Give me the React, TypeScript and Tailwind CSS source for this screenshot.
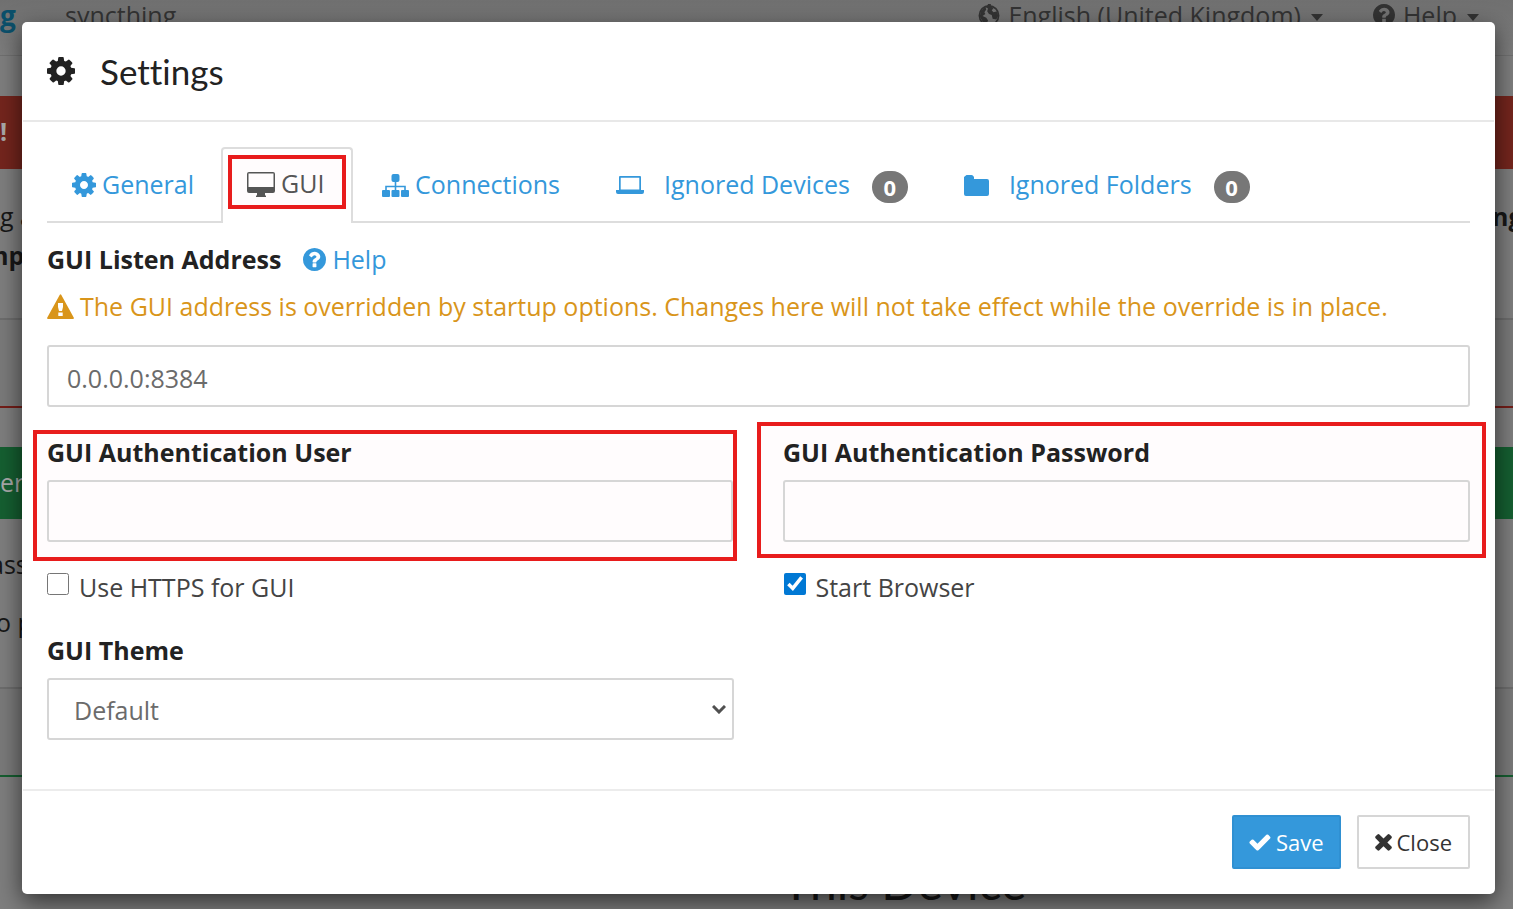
import React from "react";

type IconProps = { className?: string };

function CogIcon({ className }: IconProps) {
  return (
    <svg viewBox="128 128 1536 1536" fill="currentColor" aria-hidden="true" className={className}>
      <path d="M1152 896q0-106-75-181t-181-75-181 75-75 181 75 181 181 75 181-75 75-181zm512-109v222q0 12-8 23t-20 13l-185 28q-19 54-39 91 35 50 107 138 10 12 10 25t-9 23q-27 37-99 108t-94 71q-12 0-26-9l-138-108q-44 23-91 38-16 136-29 186-7 28-36 28h-222q-14 0-24.5-8.5t-11.5-21.5l-28-184q-49-16-90-37l-141 107q-10 9-25 9-14 0-25-11-126-114-165-168-7-10-7-23 0-12 8-23 15-21 51-66.5t54-70.5q-27-50-41-99l-183-27q-13-2-21-12.5t-8-23.5v-222q0-12 8-23t19-13l186-28q14-46 39-92-40-57-107-138-10-12-10-24 0-10 9-23 26-36 98.5-107.5t94.5-71.5q13 0 26 10l138 107q44-23 91-38 16-136 29-186 7-28 36-28h222q14 0 24.5 8.500t11.5 21.500l28 184q49 16 90 37l142-107q9-9 24-9 13 0 25 10 129 119 165 170 7 8 7 22 0 12-8 23-15 21-51 66.500t-54 70.500q26 50 41 98l183 28q13 2 21 12.500t8 23.500z" />
    </svg>
  );
}

function HelpIcon({ className }: IconProps) {
  return (
    <svg viewBox="128 128 1536 1536" fill="currentColor" aria-hidden="true" className={className}>
      <path d="M1024 1376v-192q0-14-9-23t-23-9h-192q-14 0-23 9t-9 23v192q0 14 9 23t23 9h192q14 0 23-9t9-23zm256-672q0-88-55.5-163t-138.5-116-170-41q-243 0-371 213-15 24 8 42l132 100q7 6 19 6 16 0 25-12 53-68 86-92 34-24 86-24 48 0 85.5 26t37.5 59q0 38-20 61t-68 45q-63 28-115.5 86.5t-52.5 125.5v36q0 14 9 23t23 9h192q14 0 23-9t9-23q0-19 21.5-49.5t54.5-49.5q32-18 49-28.5t46-35 44.5-48 28-60.5 12.5-81zm384 192q0 209-103 385.5t-279.5 279.5-385.5 103-385.5-103-279.5-279.5-103-385.5 103-385.5 279.5-279.5 385.5-103 385.5 103 279.5 279.5 103 385.5z" />
    </svg>
  );
}

function CheckIcon({ className }: IconProps) {
  return (
    <svg viewBox="90 300 1620 1250" fill="currentColor" aria-hidden="true" className={className}>
      <path d="M1671 566q0 40-28 68l-724 724-136 136q-28 28-68 28t-68-28l-136-136-362-362q-28-28-28-68t28-68l136-136q28-28 68-28t68 28l294 295 656-657q28-28 68-28t68 28l136 136q28 28 28 68z" />
    </svg>
  );
}

function TimesIcon({ className }: IconProps) {
  return (
    <svg viewBox="290 366 1210 1200" fill="currentColor" aria-hidden="true" className={className}>
      <path d="M1490 1322q0 40-28 68l-136 136q-28 28-68 28t-68-28l-294-294-294 294q-28 28-68 28t-68-28l-136-136q-28-28-28-68t28-68l294-294-294-294q-28-28-28-68t28-68l136-136q28-28 68-28t68 28l294 294 294-294q28-28 68-28t68 28l136 136q28 28 28 68t-28 68l-294 294 294 294q28 28 28 68z" />
    </svg>
  );
}

function DesktopIcon({ className }: IconProps) {
  return (
    <svg viewBox="0 0 28 25" fill="currentColor" aria-hidden="true" className={className}>
      <path fillRule="evenodd" d="M2 0h24a2 2 0 0 1 2 2v17a2 2 0 0 1-2 2h-8v2l1 1v1H9v-1l1-1v-2H2a2 2 0 0 1-2-2V2a2 2 0 0 1 2-2Zm-.5 1.5V15h25V1.500Z" />
    </svg>
  );
}

function SitemapIcon({ className }: IconProps) {
  return (
    <svg viewBox="0 0 27 23" fill="currentColor" aria-hidden="true" className={className}>
      <rect x="9.500" width="8" height="8" rx="2" />
      <rect y="16" width="8" height="7" rx="1" />
      <rect x="9.500" y="16" width="8" height="7" rx="1" />
      <rect x="19" y="16" width="8" height="7" rx="1" />
      <path d="M13.500 7v10M4 17v-4.500h19V17" fill="none" stroke="currentColor" strokeWidth="1.600" />
    </svg>
  );
}

function LaptopIcon({ className }: IconProps) {
  return (
    <svg viewBox="0 0 28 18" fill="currentColor" aria-hidden="true" className={className}>
      <path fillRule="evenodd" d="M4 0h20a1 1 0 0 1 1 1v13h3v2a2 2 0 0 1-2 2H2a2 2 0 0 1-2-2v-2h3V1a1 1 0 0 1 1-1Zm.7 1.700V13.500h18.600V1.700Z" />
    </svg>
  );
}

function FolderIcon({ className }: IconProps) {
  return (
    <svg viewBox="0 0 25 21" fill="currentColor" aria-hidden="true" className={className}>
      <path d="M2.500 0h5q1.500 0 2.500 2v2h13a2 2 0 0 1 2 2v13a2 2 0 0 1-2 2H2a2 2 0 0 1-2-2V2Z" />
    </svg>
  );
}

function WarningIcon({ className }: IconProps) {
  return (
    <svg viewBox="0 0 27 25" fill="currentColor" aria-hidden="true" className={className}>
      <path fillRule="evenodd" d="M12.800.8q.7-1.200 1.400 0L26.700 23.500q.6 1.200-.7 1.500H1q-1.300-.3-.7-1.500ZM11 9v4l1 4h3l1-4V9Zm.3 9.500V22h4.400v-3.500Z" />
    </svg>
  );
}

function GlobeIcon({ className }: IconProps) {
  return (
    <svg viewBox="0 0 24 24" aria-hidden="true" className={className}>
      <circle cx="12" cy="12.500" r="10.500" fill="none" stroke="currentColor" strokeWidth="1.800" />
      <path
        d="M11 0h3v3l3 1-2 3 2 2 4-1 1 5-2 4-4-1-1-4-3-1-2-3 1-3-2-1ZM8 3l1 3-2 3 1 2-3 2 4 2 2 3-2 4-4-3-3-5 1-6Z"
        fill="currentColor"
      />
    </svg>
  );
}

function Caret() {
  return (
    <svg viewBox="0 0 12 7" fill="currentColor" aria-hidden="true" className="mt-1 h-[7px] w-3">
      <path d="M0 0h12L6 7Z" />
    </svg>
  );
}

const tabClass = "flex h-[74px] items-center rounded-t-sm border border-transparent pt-0.5";
const inputClass =
  "block h-[62px] w-full rounded-[3px] border-2 border-[#d6d6d6] bg-transparent px-[18px] pt-1 text-[#6b6b6b] outline-none";
const labelClass = "block font-bold leading-9 text-[#222]";

function Badge({ count }: { count: number }) {
  return (
    <span className="ml-[22px] mt-1 flex h-8 w-9 items-center justify-center rounded-full bg-[#777] text-[22px] font-bold text-white">
      {count}
    </span>
  );
}

// Dashboard behind the dialog, already dimmed
function Backdrop() {
  return (
    <div aria-hidden="true" className="min-h-screen bg-[#7e7e7e] text-[#171717]">
      <div className="flex h-14 items-start justify-between border-b border-[#707070] bg-linear-to-b from-[#707070] to-[#7d7d7d] text-[#333]">
        <div className="flex items-center">
          <span className="w-[65px] text-[28px] leading-7 font-bold text-[#0b506b]">g</span>
          <span className="leading-[30px]">syncthing</span>
        </div>
        <div className="flex items-center pr-[34px] leading-[30px]">
          <GlobeIcon className="mr-2 size-[22px]" />
          <span className="mr-2.5">English (United Kingdom)</span>
          <Caret />
          <HelpIcon className="mr-2 ml-[50px] size-[22px]" />
          <span className="mr-2.5">Help</span>
          <Caret />
        </div>
      </div>

      <div className="mt-10 border-b-2 border-[#741d18]">
        <div className="h-[73px] bg-[#74251d] leading-[70px] font-bold text-[#a9a9a9]">!</div>
        <div className="h-[149px] pt-7 leading-[39px]">
          <div className="flex justify-between">
            <span>g a</span>
            <span className="w-[21px] font-bold">ng</span>
          </div>
          <div className="-ml-4 font-bold">mp</div>
        </div>
        <div className="h-[88px] border-t-2 border-[#6d6d6d] bg-[#7a7a7a]" />
      </div>

      <div className="mt-[39px] border-b-2 border-[#155e30]">
        <div className="h-[72px] bg-[#155f31] leading-[70px] text-[#a9a9a9]">er</div>
        <div className="h-[168px] pt-4 leading-[58px]">
          <div className="-ml-2.5">ass</div>
          <div className="-ml-1">o p</div>
        </div>
        <div className="h-[88px] border-t-2 border-[#6d6d6d] bg-[#7a7a7a]" />
      </div>

      <div className="mt-20 pl-[782px] font-[Lato,sans-serif] text-5xl leading-[50px]">This Device</div>
    </div>
  );
}

export default function App() {
  const [user, setUser] = React.useState("");
  const [password, setPassword] = React.useState("");
  const [address, setAddress] = React.useState("0.0.0.0:8384");
  const [https, setHttps] = React.useState(false);
  const [startBrowser, setStartBrowser] = React.useState(true);

  return (
    <div className="relative h-screen overflow-hidden font-['Open_Sans','Noto_Sans',sans-serif] text-[25px]">
      <Backdrop />

      <div className="absolute inset-0 pt-[22px] pr-[18px] pl-[22px]">
        <div role="dialog" aria-labelledby="settings-title" className="rounded-[5px] bg-white px-px shadow-[0_8px_24px_rgba(0,0,0,0.6)]">
          <div className="flex h-[100px] items-center border-b-2 border-[#e8e8e8] px-6 text-[#222]">
            <CogIcon className="size-7" />
            <h4 id="settings-title" className="ml-[25px] font-[Lato,sans-serif] text-[35px] leading-10 [font-variant-ligatures:none]">
              Settings
            </h4>
          </div>

          <div className="px-6 pt-[25px] text-[#444]">
            <nav className="flex gap-0.5 border-b-2 border-[#ddd] text-[#3498db]">
              <a href="#general" className={`${tabClass} px-6`}>
                <CogIcon className="mr-1.5 size-6" />
                General
              </a>
              <a
                href="#gui"
                aria-current="page"
                className="-mb-0.5 flex h-[76px] items-start rounded-t-sm border-2 border-b-0 border-[#ddd] bg-white px-[5px] pt-1.5 text-[#555]"
              >
                <span className="flex h-[54px] w-[118px] items-center border-4 border-[#e81c1c] bg-[#fffcfd] pt-1 pl-[15px]">
                  <DesktopIcon className="mr-1.5 h-[25px] w-7" />
                  GUI
                </span>
              </a>
              <a href="#connections" className={`${tabClass} px-[26px]`}>
                <SitemapIcon className="mr-1.5 h-[23px] w-[27px]" />
                Connections
              </a>
              <a href="#ignored-devices" className={`${tabClass} px-[26px]`}>
                <LaptopIcon className="mr-5 h-[18px] w-7" />
                Ignored Devices
                <Badge count={0} />
              </a>
              <a href="#ignored-folders" className={`${tabClass} px-[26px]`}>
                <FolderIcon className="mr-5 h-[21px] w-[25px]" />
                Ignored Folders
                <Badge count={0} />
              </a>
            </nav>

            <div className="mt-[18px] flex items-center leading-9">
              <label htmlFor="address" className={labelClass}>
                GUI Listen Address
              </label>
              <a href="#help" className="ml-[22px] flex items-center text-[#3498db]">
                <HelpIcon className="mr-1.5 size-[23px]" />
                Help
              </a>
            </div>
            <p className="mt-[11px] flex items-center leading-9 text-[#d9951a]">
              <WarningIcon className="mr-1.5 h-[25px] w-[27px] shrink-0" />
              The GUI address is overridden by startup options. Changes here will not take effect while the override is in place.
            </p>
            <input id="address" value={address} onChange={(e) => setAddress(e.target.value)} className={`mt-[21px] ${inputClass}`} />

            <div className="-mr-4 -ml-3.5 mt-[15px] grid grid-cols-[704fr_729fr] items-start gap-5">
              <div className="mt-2 h-[131px] border-4 border-[#e81c1c] bg-[#fffcfd] pl-2.5">
                <label htmlFor="user" className={labelClass}>
                  GUI Authentication User
                </label>
                <input id="user" value={user} onChange={(e) => setUser(e.target.value)} className={`mt-2.5 ${inputClass}`} />
              </div>
              <div className="h-[136px] border-4 border-[#e81c1c] bg-[#fffcfd] pt-2 pr-3 pl-[22px]">
                <label htmlFor="password" className={labelClass}>
                  GUI Authentication Password
                </label>
                <input
                  id="password"
                  type="password"
                  value={password}
                  onChange={(e) => setPassword(e.target.value)}
                  className={`mt-2.5 ${inputClass}`}
                />
              </div>
            </div>

            <div className="mt-2 grid grid-cols-2 gap-[50px] leading-9">
              <label className="flex items-center">
                <input type="checkbox" checked={https} onChange={(e) => setHttps(e.target.checked)} className="mr-2.5 mb-1.5 size-[22px]" />
                Use HTTPS for GUI
              </label>
              <label className="flex items-center">
                <input
                  type="checkbox"
                  checked={startBrowser}
                  onChange={(e) => setStartBrowser(e.target.checked)}
                  className="mr-2.5 mb-1.5 size-[22px] accent-[#0078d4]"
                />
                Start Browser
              </label>
            </div>

            <div className="mt-[27px] grid grid-cols-2 gap-[50px]">
              <div>
                <label htmlFor="theme" className={labelClass}>
                  GUI Theme
                </label>
                <div className="relative mt-2.5">
                  <select
                    id="theme"
                    className="block h-[62px] w-full appearance-none rounded-[3px] border-2 border-[#d6d6d6] bg-white px-[25px] pt-1 text-[#6b6b6b] outline-none"
                  >
                    <option>Default</option>
                  </select>
                  <svg viewBox="0 0 14 9" aria-hidden="true" className="pointer-events-none absolute top-[27px] right-2 h-[9px] w-3.5">
                    <path d="M1 1l6 6 6-6" fill="none" stroke="#505050" strokeWidth="3" />
                  </svg>
                </div>
              </div>
            </div>
          </div>

          <div className="mt-[49px] flex justify-end gap-4 border-t-2 border-[#ececec] px-6 pt-6 pb-[25px] text-[22px]">
            <button className="flex h-[54px] items-center rounded-[2px] border-2 border-[#2f90d2] bg-[#3498db] px-[15px] text-white">
              <CheckIcon className="mr-[5px] h-[17px] w-[22px]" />
              Save
            </button>
            <button className="flex h-[54px] items-center rounded-[2px] border-2 border-[#d6d6d6] bg-white px-4 text-[#333]">
              <TimesIcon className="mr-[5px] size-[17px]" />
              Close
            </button>
          </div>
        </div>
      </div>
    </div>
  );
}
